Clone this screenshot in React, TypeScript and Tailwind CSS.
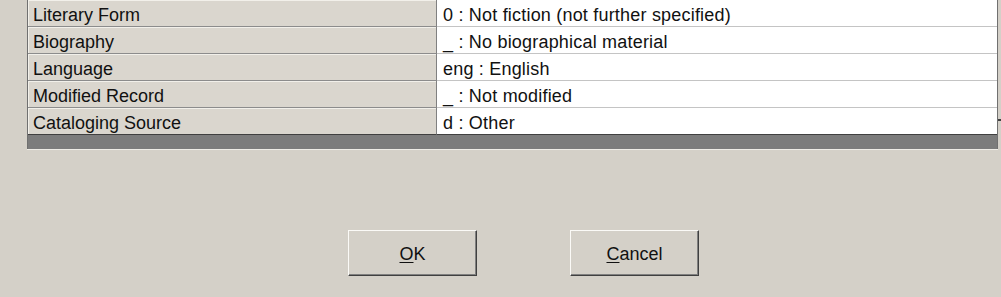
const rows: [string, string][] = [
  ['Literary Form', '0 : Not fiction (not further specified)'],
  ['Biography', '_ : No biographical material'],
  ['Language', 'eng : English'],
  ['Modified Record', '_ : Not modified'],
  ['Cataloging Source', 'd : Other'],
]

function Button({ first, rest }: { first: string; rest: string }) {
  return (
    <button className="w-[129px] h-[46px] pt-[3px] bg-[#d4d0c8] border border-t-[#fbfaf7] border-l-[#fbfaf7] border-b-[#404040] border-r-[#404040] shadow-[inset_-1px_-1px_0_#808080] flex items-center justify-center text-[18px] text-[#111]">
      <span className="underline underline-offset-2">{first}</span>
      {rest}
    </button>
  )
}

export default function App() {
  return (
    <div className="w-[1001px] h-[297px] bg-[#d4d0c8] overflow-hidden font-['Liberation_Sans',Arial,sans-serif] text-[#111] relative">
      <div className="ml-[27px] w-[971px] border-l border-r border-[#707070]">
        {rows.map(([label, value], i) => {
          const last = i === rows.length - 1
          return (
            <div key={label} className="flex h-[27px]">
              <div
                className={
                  'w-[409px] bg-[#dad6ce] border-r border-[#808080] pl-[5px] pt-[5px] leading-[20px] text-[18px] shadow-[inset_1px_1px_0_#f2f0ea] border-b ' +
                  (last ? 'border-b-[#404040]' : 'border-b-[#8c8c8c]')
                }
              >
                {label}
              </div>
              <div
                className={
                  'flex-1 bg-white pl-[6px] pt-[5px] leading-[20px] text-[18px] tracking-[0.2px] border-b ' +
                  (last ? 'border-b-[#404040]' : 'border-b-[#c4c4c4]')
                }
              >
                {value}
              </div>
            </div>
          )
        })}
        <div className="h-[14px] bg-[#7c7c7c]" />
      </div>
      <div className="ml-[27px] w-[971px] h-px bg-[#eeece6]" />
      <div className="absolute left-[998px] top-[119px] w-[3px] h-[2px] bg-[#404040]" />
      <div className="flex gap-[93px] pl-[348px] mt-[80px]">
        <Button first="O" rest="K" />
        <Button first="C" rest="ancel" />
      </div>
    </div>
  )
}
